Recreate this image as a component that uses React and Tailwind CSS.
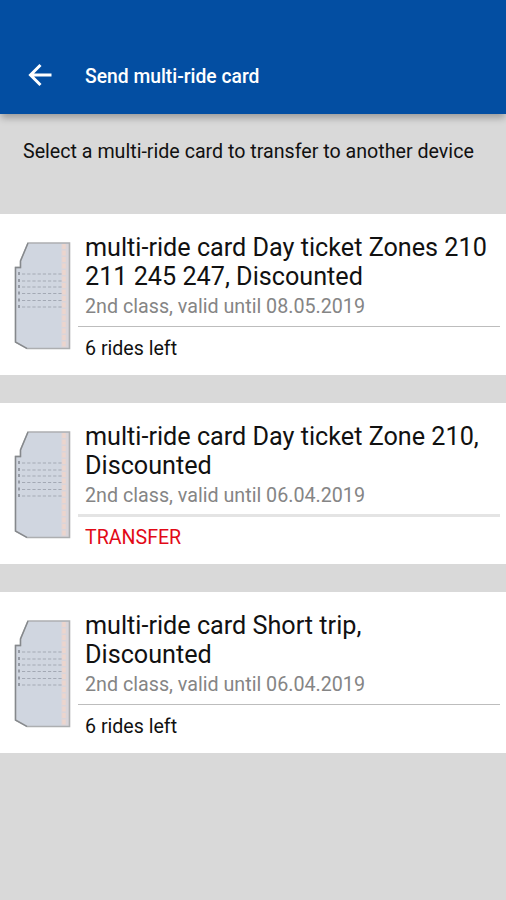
import React from 'react';

const cards = [
  {
    id: 1,
    title: ['multi-ride card Day ticket Zones 210', '211 245 247, Discounted'],
    details: '2nd class, valid until 08.05.2019',
    rides: 6,
  },
  {
    id: 2,
    title: ['multi-ride card Day ticket Zone 210,', 'Discounted'],
    details: '2nd class, valid until 06.04.2019',
    transfer: true,
  },
  {
    id: 3,
    title: ['multi-ride card Short trip,', 'Discounted'],
    details: '2nd class, valid until 06.04.2019',
    rides: 6,
  },
];

function TicketIcon() {
  return (
    <svg className="w-[58px] h-[110px] shrink-0" viewBox="0 0 58 110" fill="none">
      <path d="M14 2H55.5V107.5H13L1.5 101V26.5H6.5V20Z" fill="#d0d6e0" />
      <path d="M47 3H55V107H47Z" fill="#d9d5da" />
      <path d="M50 3V107" stroke="#ecd5cd" strokeWidth="3.5" strokeDasharray="5 1.5" />
      {/* Stamp lines */}
      {[33, 40, 46, 52.5, 59.5, 66].map((y) => (
        <g key={y}>
          <path d={`M8 ${y}H48`} stroke="#a3a9b4" strokeWidth="1.1" strokeDasharray="3.2 2" />
          <path d={`M5 ${y - 2}V${y + 1}`} stroke="#8d929b" strokeWidth="1.7" />
        </g>
      ))}
      <path
        d="M14 2H55.5V107.5H13L1.5 101V26.5H6.5V20Z"
        stroke="#adafb1"
        strokeWidth="1.6"
      />
      <path d="M14 2L6.5 20V26.5H1.5V101L13 107.5" stroke="#85888c" strokeWidth="1.3" />
    </svg>
  );
}

function RideCard({ card }) {
  return (
    <li className="flex h-[161px] bg-white pl-3.5 pr-1.5 pt-[19px]">
      <div className="pt-[7.5px]">
        <TicketIcon />
      </div>
      <div className="ml-1.5 flex-1">
        <div className="pl-[7px]">
          <h2 className="text-[25.2px] leading-[29px] text-[#111111] whitespace-nowrap">
            {card.title.map((line) => (
              <span key={line} className="block">
                {line}
              </span>
            ))}
          </h2>
          <p className="mt-1 text-[19.7px] leading-6 text-[#858585] whitespace-nowrap">
            {card.details}
          </p>
        </div>
        {card.transfer ? (
          <>
            <div className="mt-1.5 h-[3px] bg-[#e4e4e4]" />
            <button className="mt-[9px] block pl-[7px] text-[19.6px] leading-6 text-[#e20a17]">
              TRANSFER
            </button>
          </>
        ) : (
          <>
            <div className="mt-[7px] h-px bg-[#bdbdbd]" />
            <p className="mt-2.5 pl-[7px] text-[19.6px] leading-6 text-[#111111]">
              {card.rides} rides left
            </p>
          </>
        )}
      </div>
    </li>
  );
}

function App() {
  return (
    <div className="h-[900px] w-full overflow-hidden bg-[#d9d9d9] font-['Roboto',sans-serif]">
      {/* App bar */}
      <header className="flex h-[114px] items-center bg-[#034ea2] pt-[37px] shadow-[0_5px_7px_-1px_rgba(0,0,0,0.28)]">
        <button aria-label="Back" className="-mt-0.5 ml-[27px]">
          <svg className="block h-[26px] w-[26px]" viewBox="0 0 26 26" fill="none">
            <path d="M24.5 13H4M13.5 3L3.5 13L13.5 23" stroke="#fff" strokeWidth="3" />
          </svg>
        </button>
        <h1 className="ml-8 pt-1 text-[19.3px] font-medium text-white">Send multi-ride card</h1>
      </header>

      <main>
        <p className="h-[100px] pl-[23px] pt-[26px] text-[19.65px] leading-6 text-[#111111] whitespace-nowrap">
          Select a multi-ride card to transfer to another device
        </p>
        <ul className="flex flex-col gap-7">
          {cards.map((card) => (
            <RideCard key={card.id} card={card} />
          ))}
        </ul>
      </main>
    </div>
  );
}

export default App;
